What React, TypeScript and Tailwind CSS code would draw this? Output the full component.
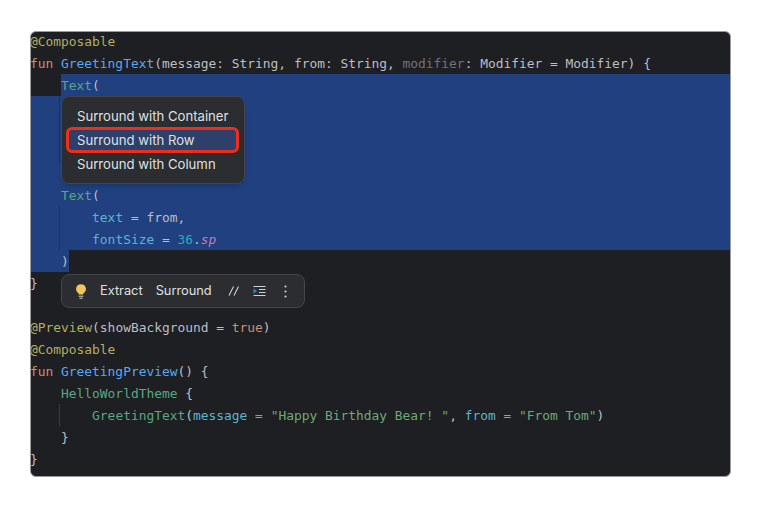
type Seg = [string, string?];

const kw = "text-[#cf8e6d]";
const ann = "text-[#b3ae60]";
const fn = "text-[#56a8f5]";
const call = "text-[#57a883]";
const param = "text-[#56b6d0]";
const num = "text-[#2aacb8]";
const ext = "text-[#c77dbb] italic";
const str = "text-[#6aab73]";
const dim = "text-[#6f737a]";

function Code({ segs }: { segs: Seg[] }) {
  return (
    <>
      {segs.map(([t, c], i) => (
        <span key={i} className={c}>
          {t}
        </span>
      ))}
    </>
  );
}

function Line({ segs, selected, guide }: { segs: Seg[]; selected?: boolean; guide?: boolean }) {
  return (
    <div className={`relative h-[22px] leading-6 whitespace-pre ${selected ? "bg-[#204080]" : ""}`}>
      {guide && <div className={`absolute left-[29px] top-0 h-[22px] w-px ${selected ? "bg-[#1b3566]" : "bg-[#393b40]"}`}></div>}
      <Code segs={segs} />
    </div>
  );
}

export default function App() {
  return (
    <div className="w-[761px] h-[507px] bg-white pl-[30px] pt-[31px]">
      <div className="relative w-[701px] h-[446px] bg-[#1e1f22] rounded-md border border-[#9a9b9d] overflow-hidden font-['DejaVu_Sans_Mono',monospace] text-[12.9px] text-[#bcbec4]">
        <div className="-mx-px -mt-[2px]">
          <Line segs={[["@Composable", ann]]} />
          <Line
            segs={[
              ["fun ", kw],
              ["GreetingText", fn],
              ["(message: String, from: String, "],
              ["modifier", dim],
              [": Modifier = Modifier) {"],
            ]}
          />
          <div className="flex h-[22px] leading-6 whitespace-pre pl-[31px]">
            <div className="flex-1 bg-[#204080]">
              <Code segs={[["Text", call], ["("]]} />
            </div>
          </div>
          {/* these lines sit under the popup, only the selection and the guide show */}
          <Line selected guide segs={[]} />
          <Line selected guide segs={[]} />
          <Line selected guide segs={[]} />
          <Line selected segs={[]} />
          <Line selected segs={[["    "], ["Text", call], ["("]]} />
          <Line selected guide segs={[["        "], ["text", param], [" = from,"]]} />
          <Line selected guide segs={[["        "], ["fontSize", param], [" = "], ["36", num], ["."], ["sp", ext]]} />
          <div className="h-[22px] leading-6 whitespace-pre">
            <span className="inline-block h-[22px] w-[39px] bg-[#204080]">{"    )"}</span>
          </div>
          <Line segs={[["}"]]} />
          <Line segs={[[" "]]} />
          <Line
            segs={[
              ["@Preview", ann],
              ["(showBackground = "],
              ["true", kw],
              [")"],
            ]}
          />
          <Line segs={[["@Composable", ann]]} />
          <Line segs={[["fun ", kw], ["GreetingPreview", fn], ["() {"]]} />
          <Line segs={[["    "], ["HelloWorldTheme", call], [" {"]]} />
          <Line
            guide
            segs={[
              ["        "],
              ["GreetingText", call],
              ["("],
              ["message", param],
              [" = ", param],
              ['"Happy Birthday Bear! "', str],
              [", "],
              ["from", param],
              [" = ", param],
              ['"From Tom"', str],
              [")"],
            ]}
          />
          <Line segs={[["    }"]]} />
          <Line segs={[["}"]]} />
        </div>

        {/* popup menu */}
        <div className="absolute left-[30px] top-[64px] w-[184px] h-[88px] rounded-lg bg-[#2b2d30] border border-[#43454a] shadow-md pt-[7px] px-[5px] font-['Inter',sans-serif] text-[13.15px] text-[#dfe1e5]">
          <div className="h-6 leading-6 pl-[10px] whitespace-nowrap">Surround with Container</div>
          <div className="h-[26px] -my-px -ml-px leading-5 pl-[8px] whitespace-nowrap bg-[#2e3f69] rounded-md border-[3px] border-[#f02e1c]">
            Surround with Row
          </div>
          <div className="h-6 leading-6 pl-[10px] whitespace-nowrap">Surround with Column</div>
        </div>

        {/* floating toolbar */}
        <div className="absolute left-[30px] top-[242px] w-[244px] h-[34px] rounded-lg bg-[#2b2d30] border border-[#43454a] flex items-center font-['Inter',sans-serif] text-[12.8px] text-[#dfe1e5]">
          <svg className="ml-[14px]" width="10" height="15" viewBox="0 0 10 15">
            <path d="M5 .3a4.8 4.8 0 0 0-2.9 8.7c.5.4.8 1 .8 1.5h4.2c0-.5.3-1.1.8-1.5A4.8 4.8 0 0 0 5 .3z" fill="#f2c55c" />
            <path d="M3 12.2h4M3.8 14.2h2.4" stroke="#ced0d6" strokeWidth="1" strokeLinecap="round" />
          </svg>
          <span className="ml-[14px]">Extract</span>
          <span className="ml-[13px]">Surround</span>
          <svg className="ml-[16px]" width="12" height="12" viewBox="0 0 12 12" fill="none" stroke="#ced0d6" strokeWidth="1.1">
            <path d="M1 10.5 5.5 1.5M6 10.5 10.5 1.5" />
          </svg>
          <svg className="ml-[13px]" width="13" height="12" viewBox="0 0 13 12">
            <path d="M.5 1.5h12M6 4.5h6.5M6 7.5h6.5M.5 10.5h12" stroke="#ced0d6" strokeWidth="1" />
            <path d="M.5 3.5 4 6 .5 8.5z" fill="#3d7fe0" />
          </svg>
          <svg className="ml-[18px]" width="3" height="13" viewBox="0 0 3 13" fill="#ced0d6">
            <circle cx="1.5" cy="1.5" r="1.1" />
            <circle cx="1.5" cy="6.5" r="1.1" />
            <circle cx="1.5" cy="11.5" r="1.1" />
          </svg>
        </div>
      </div>
    </div>
  );
}
